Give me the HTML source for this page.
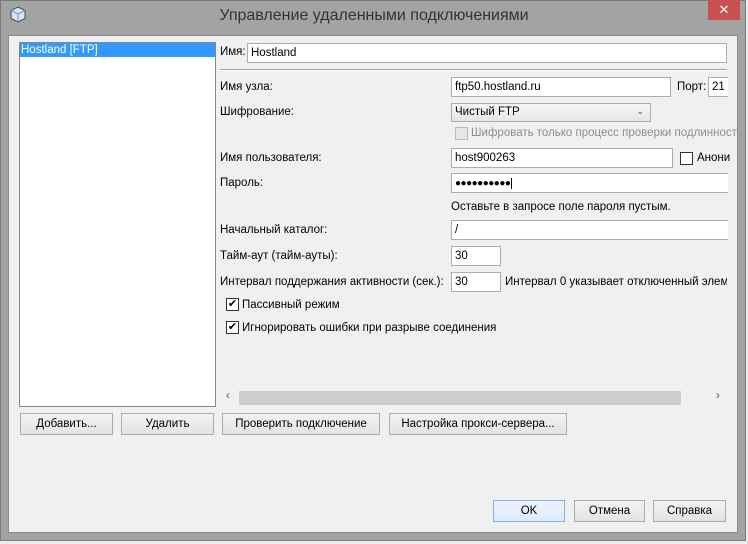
<!DOCTYPE html>
<html><head><meta charset="utf-8"><style>
*{box-sizing:border-box;margin:0;padding:0}
body{width:748px;height:544px;background:#ececec;position:relative;overflow:hidden;font-family:"Liberation Sans","DejaVu Sans",sans-serif;font-size:11.5px;color:#000}
.a{position:absolute;white-space:nowrap}
.frame{left:0;top:0;width:746px;height:541px;background:#a3a3a3;border:1px solid #7a7a7a}
.content{left:8px;top:35px;width:730px;height:498px;background:#f0f0f0;border:1px solid #8a8a8a}
.in{position:absolute;background:#fff;border:1px solid #abadb3;height:20px;padding:3px 3px 0;overflow:hidden;white-space:nowrap}
.lbl{position:absolute;white-space:nowrap}
.btn{position:absolute;height:22px;border:1px solid #acacac;background:linear-gradient(#f2f2f2,#e3e3e3);text-align:center;line-height:20px}
.cb{position:absolute;width:13px;height:13px;border:1px solid #333;background:#fff}
</style></head><body>
<div class="a frame"></div>
<div class="a" style="left:10px;top:6px;width:16px;height:17px">
<svg width="16" height="17" viewBox="0 0 16 17"><path d="M8 1 L15 4.5 L15 12.5 L8 16 L1 12.5 L1 4.5 Z" fill="#d8e4f2" stroke="#3b4b66"/><path d="M1 4.5 L8 8 L15 4.5 M8 8 L8 16" fill="none" stroke="#7d8fae"/></svg></div>
<div class="a" style="left:0;width:748px;top:7px;text-align:center;font-size:16px;color:#333">Управление удаленными подключениями</div>
<div class="a" style="left:708px;top:0;width:32px;height:20px;background:#c75050;color:#fff;text-align:center;font-size:13px;line-height:19px">✕</div>
<div class="a content"></div>
<div class="a" style="left:19px;top:42px;width:197px;height:365px;background:#fff;border:1px solid #828790"></div>
<div class="a" style="left:20px;top:43px;width:195px;height:14px;background:#3399ff;color:#fff;padding-left:1px;line-height:14px">Hostland [FTP]</div>

<div class="lbl" style="left:220px;top:46px">Имя:</div>
<div class="in" style="left:247px;top:43px;width:480px">Hostland</div>
<div class="a" style="left:220px;top:69px;width:507px;height:2px;border-top:1px solid #a0a0a0;border-bottom:1px solid #fff"></div>

<div class="lbl" style="left:220px;top:81px">Имя узла:</div>
<div class="in" style="left:451px;top:77px;width:220px">ftp50.hostland.ru</div>
<div class="lbl" style="left:677px;top:81px">Порт:</div>
<div class="in" style="left:708px;top:77px;width:20px;border-right:none">21</div>

<div class="lbl" style="left:220px;top:106px">Шифрование:</div>
<div class="in" style="left:451px;top:103px;width:200px;height:19px;background:linear-gradient(#f6f6f6,#e6e6e6);border-color:#acacac;padding-top:2px">Чистый FTP<span style="position:absolute;right:6px;top:2px;font-size:9px;color:#444">⌄</span></div>

<div class="cb" style="left:455px;top:127px;border-color:#bcbcbc;background:#e6e6e6"></div>
<div class="lbl" style="left:471px;top:127px;color:#8d8d8d">Шифровать только процесс проверки подлинност</div>

<div class="lbl" style="left:220px;top:152px">Имя пользователя:</div>
<div class="in" style="left:451px;top:148px;width:222px">host900263</div>
<div class="cb" style="left:680px;top:152px"></div>
<div class="lbl" style="left:697px;top:152px">Анони</div>

<div class="lbl" style="left:220px;top:177px">Пароль:</div>
<div class="in" style="left:451px;top:173px;width:277px;border-right:none;font-size:10px;letter-spacing:-0.5px;padding-top:4px">●●●●●●●●●●<span style="border-left:1px solid #000;margin-left:1px"></span></div>
<div class="lbl" style="left:451px;top:201px">Оставьте в запросе поле пароля пустым.</div>

<div class="lbl" style="left:220px;top:224px">Начальный каталог:</div>
<div class="in" style="left:451px;top:220px;width:277px;border-right:none">/</div>
<div class="lbl" style="left:220px;top:250px">Тайм-аут (тайм-ауты):</div>
<div class="in" style="left:451px;top:246px;width:50px">30</div>
<div class="lbl" style="left:220px;top:276px">Интервал поддержания активности (сек.):</div>
<div class="in" style="left:451px;top:272px;width:50px">30</div>
<div class="lbl" style="left:505px;top:276px;width:222px;overflow:hidden">Интервал 0 указывает отключенный элеме</div>

<div class="cb" style="left:226px;top:298px;font-size:11px;line-height:11px;text-align:center">✔</div>
<div class="lbl" style="left:242px;top:299px">Пассивный режим</div>
<div class="cb" style="left:226px;top:321px;font-size:11px;line-height:11px;text-align:center">✔</div>
<div class="lbl" style="left:242px;top:322px">Игнорировать ошибки при разрыве соединения</div>

<div class="lbl" style="left:226px;top:390px;color:#555">‹</div>
<div class="a" style="left:239px;top:391px;width:442px;height:14px;background:#cdcdcd"></div>
<div class="lbl" style="left:716px;top:390px;color:#555">›</div>

<div class="btn" style="left:20px;top:413px;width:93px">Добавить...</div>
<div class="btn" style="left:121px;top:413px;width:93px">Удалить</div>
<div class="btn" style="left:222px;top:413px;width:158px">Проверить подключение</div>
<div class="btn" style="left:389px;top:413px;width:178px">Настройка прокси-сервера...</div>

<div class="btn" style="left:493px;top:500px;width:72px;border-color:#7eb4ea;background:linear-gradient(#ecf4fc,#dcecfc)">OK</div>
<div class="btn" style="left:574px;top:500px;width:71px">Отмена</div>
<div class="btn" style="left:653px;top:500px;width:73px">Справка</div>
</body></html>
